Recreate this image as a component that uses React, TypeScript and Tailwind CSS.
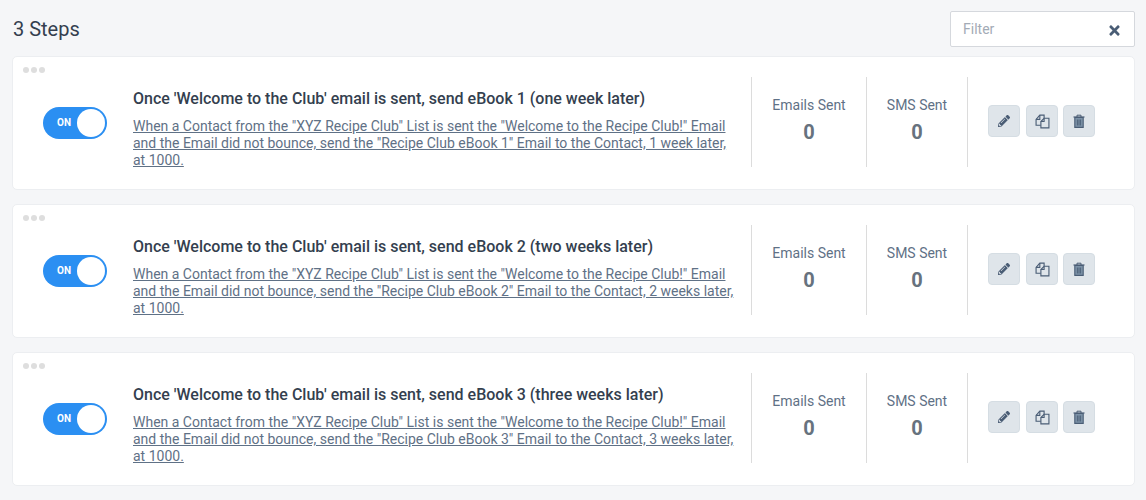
import { FaPencilAlt, FaTimes } from "react-icons/fa";

const steps = [
  { n: 1, title: "one week later", later: "1 week later" },
  { n: 2, title: "two weeks later", later: "2 weeks later" },
  { n: 3, title: "three weeks later", later: "3 weeks later" },
];

const btn =
  "flex size-[32px] items-center justify-center rounded-[4px] border border-[#d5dde3] bg-[#dfe5ea] text-[#4a5d75]";

const CopyIcon = () => (
  <svg width="15" height="15" viewBox="0 0 14 14" fill="none" stroke="currentColor" strokeWidth="1.05">
    <path d="M5.5 10.5H1V5L4.5 1H8.5V4" />
    <path d="M4.5 1V5H1" />
    <path d="M5.5 10V7L8.5 4H13V13H5.5V10Z" fill="#dfe5ea" />
    <path d="M8.5 4V7H5.5" />
  </svg>
);

const TrashIcon = () => (
  <svg width="12" height="14" viewBox="0 0 12 14" fill="none" stroke="currentColor">
    <path d="M0.5 3H11.5" strokeWidth="1.2" />
    <path d="M4 3V1.2H8V3" strokeWidth="1" />
    <path d="M1.8 3.5H10.2V13.4H1.8Z" strokeWidth="1.1" fill="#7d93a8" />
    <path d="M4.4 5.5V11.5M6 5.5V11.5M7.6 5.5V11.5" strokeWidth="0.9" />
  </svg>
);

const Stat = ({ label, width }: { label: string; width: string }) => (
  <div className={`mb-[2px] flex h-[90px] flex-col items-center border-r border-[#dcdcdc] pt-[19px] ${width}`}>
    <span className="text-[14px] leading-[18px] text-[#5f7186]">{label}</span>
    <span className="mt-[4px] text-[20px] font-bold leading-[28px] text-[#67727e]">0</span>
  </div>
);

const Step = ({ n, title, later }: { n: number; title: string; later: string }) => (
  <div className="relative flex h-[134px] items-center rounded-[5px] border border-[#eceef1] bg-white">
    <div className="absolute left-[10px] top-[10px] flex gap-[2px]">
      <span className="size-[6px] rounded-full bg-[#dedede]" />
      <span className="size-[6px] rounded-full bg-[#dedede]" />
      <span className="size-[6px] rounded-full bg-[#dedede]" />
    </div>
    <div className="ml-[30px] flex h-[32px] w-[64px] items-center rounded-full bg-[#2b8ff2] pl-[14px] pr-[2px]">
      <span className="-mt-px text-[10px] font-bold text-white">ON</span>
      <span className="ml-auto size-[28px] rounded-full bg-white" />
    </div>
    <div className="ml-[26px] mt-[12px] w-[618px] pr-[10px]">
      <h3 className="text-[16px] font-medium leading-[20px] text-[#343f4f]">
        {`Once 'Welcome to the Club' email is sent, send eBook ${n} (${title})`}
      </h3>
      <a className="mt-[9px] block text-[14px] leading-[17px] text-[#5f7186] underline">
        {`When a Contact from the "XYZ Recipe Club" List is sent the "Welcome to the Recipe Club!" Email and the Email did not bounce, send the "Recipe Club eBook ${n}" Email to the Contact, ${later}, at 1000.`}
      </a>
    </div>
    <div className="mb-[2px] h-[90px] border-l border-[#dcdcdc]" />
    <Stat label="Emails Sent" width="w-[115px]" />
    <Stat label="SMS Sent" width="w-[101px]" />
    <div className="mb-[4px] ml-[20px] flex">
      <button className={btn}>
        <FaPencilAlt size={12} />
      </button>
      <button className={`ml-[6px] ${btn}`}>
        <CopyIcon />
      </button>
      <button className={`ml-[5px] ${btn}`}>
        <TrashIcon />
      </button>
    </div>
  </div>
);

export default function App() {
  return (
    <div className="min-h-[500px] bg-[#f5f6f8] pl-[12px] pr-[11px] pt-[11px] font-['Roboto',sans-serif]">
      <div className="flex h-[36px] items-center justify-between">
        <h2 className="pl-px text-[20px] text-[#343f4f]">3 Steps</h2>
        <div className="flex h-[36px] w-[185px] items-center justify-between rounded-[2px] border border-[#d5d8dd] bg-white pl-[12px] pr-[12px]">
          <span className="text-[14px] text-[#a3abb6]">Filter</span>
          <FaTimes size={15} className="mt-[2px] text-[#4a5d75]" />
        </div>
      </div>
      <div className="mt-[9px] flex flex-col gap-[14px]">
        {steps.map((s) => (
          <Step key={s.n} {...s} />
        ))}
      </div>
    </div>
  );
}
